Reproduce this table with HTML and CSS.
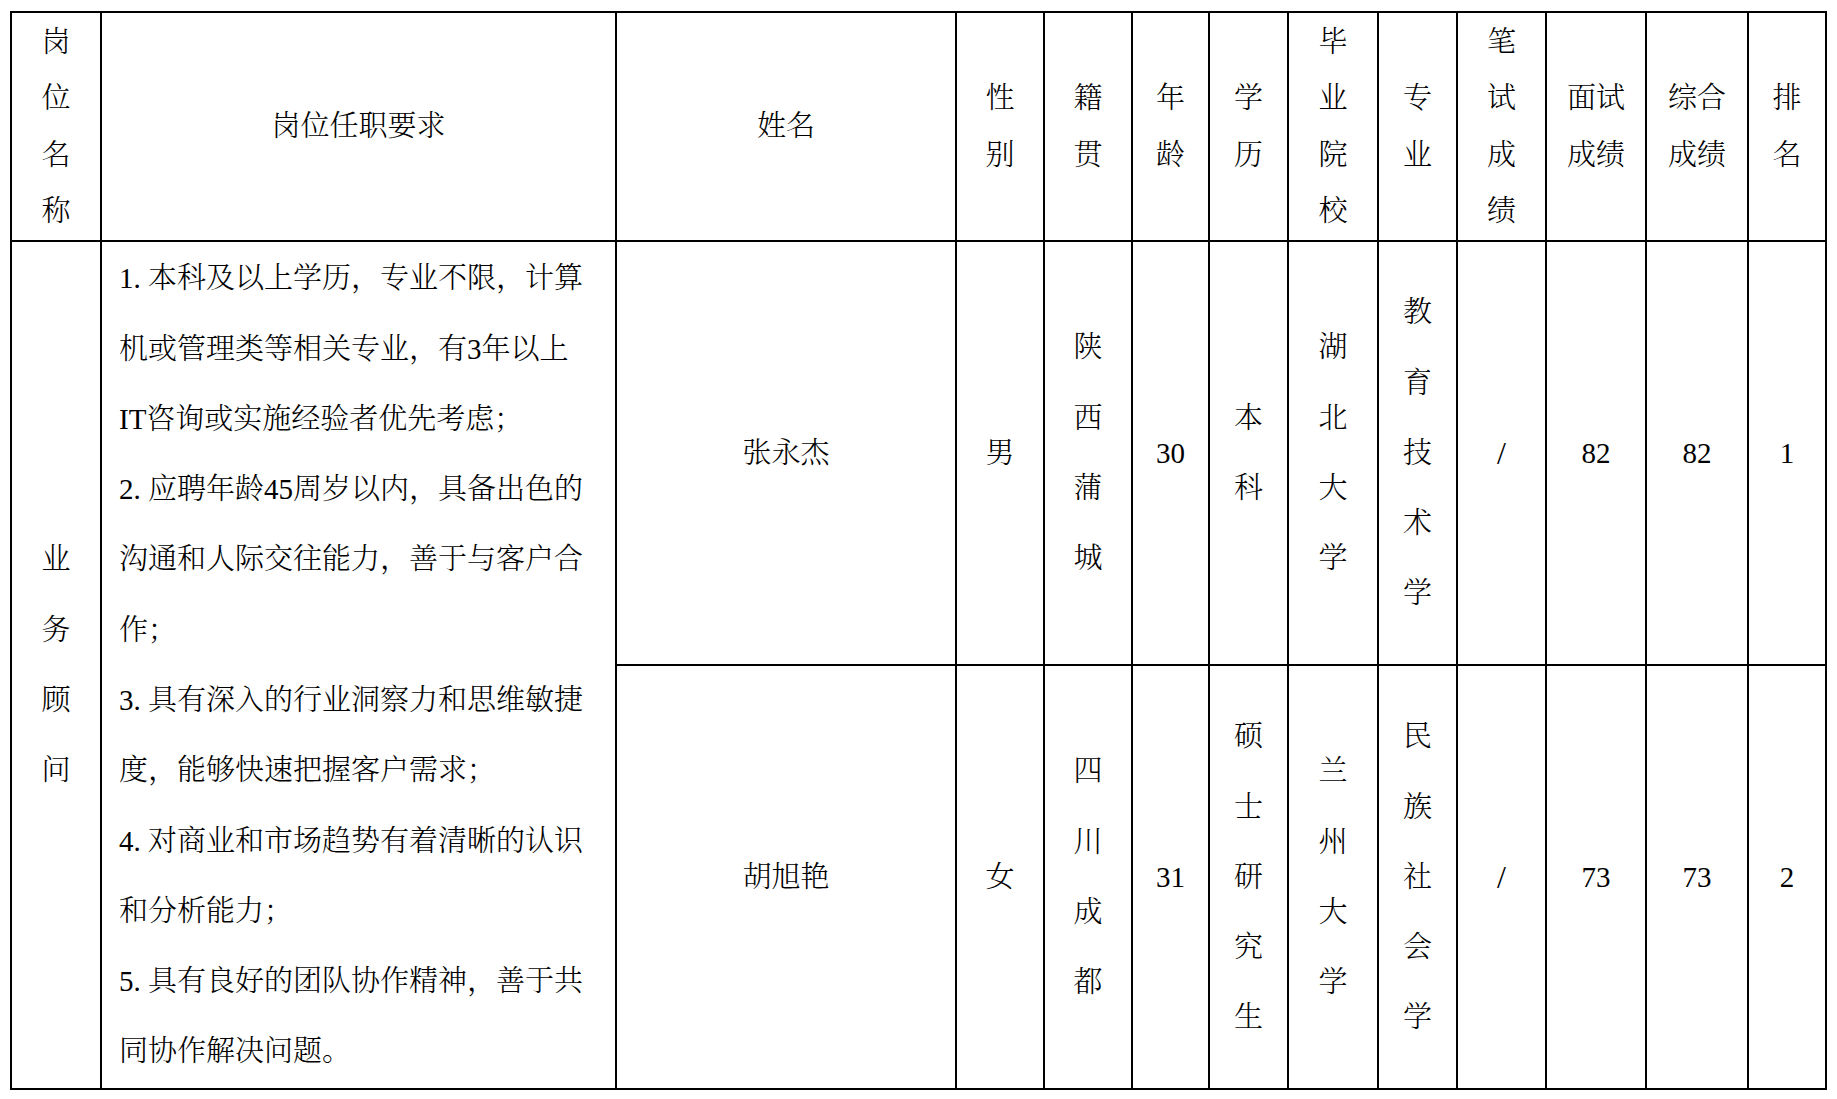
FILE: index.html
```html
<!DOCTYPE html>
<html lang="zh-CN">
<head>
<meta charset="utf-8">
<title>业务顾问 面试成绩</title>
<link rel="stylesheet" href="styles.css">
</head>
<body>
<div class="page">
<table class="grid">
<colgroup>
<col class="c-post"><col class="c-req"><col class="c-name"><col class="c-sex"><col class="c-origin"><col class="c-age"><col class="c-edu"><col class="c-school"><col class="c-major"><col class="c-written"><col class="c-interview"><col class="c-total"><col class="c-rank">
</colgroup>
<thead>
<tr class="head-row">
<th>岗<br>位<br>名<br>称</th>
<th>岗位任职要求</th>
<th>姓名</th>
<th>性<br>别</th>
<th>籍<br>贯</th>
<th>年<br>龄</th>
<th>学<br>历</th>
<th>毕<br>业<br>院<br>校</th>
<th>专<br>业</th>
<th>笔<br>试<br>成<br>绩</th>
<th>面试<br>成绩</th>
<th>综合<br>成绩</th>
<th>排<br>名</th>
</tr>
</thead>
<tbody>
<tr class="data-row">
<td rowspan="2">业<br>务<br>顾<br>问</td>
<td rowspan="2" class="req">
<div class="req-text">
<p>1.&nbsp;本科及以上学历，专业不限，计算机或管理类等相关专业，有3年以上IT咨询或实施经验者优先考虑；</p>
<p>2.&nbsp;应聘年龄45周岁以内，具备出色的沟通和人际交往能力，善于与客户合作；</p>
<p>3.&nbsp;具有深入的行业洞察力和思维敏捷度，能够快速把握客户需求；</p>
<p>4.&nbsp;对商业和市场趋势有着清晰的认识和分析能力；</p>
<p>5.&nbsp;具有良好的团队协作精神，善于共同协作解决问题。</p>
</div>
</td>
<td>张永杰</td>
<td>男</td>
<td>陕<br>西<br>蒲<br>城</td>
<td>30</td>
<td>本<br>科</td>
<td>湖<br>北<br>大<br>学</td>
<td>教<br>育<br>技<br>术<br>学</td>
<td class="slash">/</td>
<td>82</td>
<td>82</td>
<td>1</td>
</tr>
<tr class="data-row">
<td>胡旭艳</td>
<td>女</td>
<td>四<br>川<br>成<br>都</td>
<td>31</td>
<td>硕<br>士<br>研<br>究<br>生</td>
<td>兰<br>州<br>大<br>学</td>
<td>民<br>族<br>社<br>会<br>学</td>
<td class="slash">/</td>
<td>73</td>
<td>73</td>
<td>2</td>
</tr>
</tbody>
</table>
</div>
</body>
</html>
```

FILE: styles.css
```css
html, body {
  margin: 0;
  padding: 0;
  background: #ffffff;
}

.page {
  padding: 11px 0 0 10px;
}

.grid {
  border-collapse: collapse;
  table-layout: fixed;
  width: 1815px;
  color: #000000;
  font-family: "Liberation Serif", "Noto Serif CJK SC", "Noto Sans CJK SC", serif;
  font-size: 29px;
  font-weight: 300;
}

.grid th,
.grid td {
  border: 2px solid #000000;
  padding: 0;
  text-align: center;
  vertical-align: middle;
  font-weight: 300;
}

.c-post { width: 90px; }
.c-req { width: 515px; }
.c-name { width: 340px; }
.c-sex { width: 88px; }
.c-origin { width: 88px; }
.c-age { width: 77px; }
.c-edu { width: 79px; }
.c-school { width: 90px; }
.c-major { width: 79px; }
.c-written { width: 89px; }
.c-interview { width: 100px; }
.c-total { width: 102px; }
.c-rank { width: 78px; }

.head-row th {
  height: 227px;
  line-height: 56.2px;
}

.data-row td {
  height: 422px;
  line-height: 70.3px;
}

.grid td.req {
  text-align: left;
  padding-left: 17px;
}

.req-text {
  width: 470px;
}

.req-text p {
  margin: 0;
}

.grid td.slash {
  font-size: 32px;
}
```
